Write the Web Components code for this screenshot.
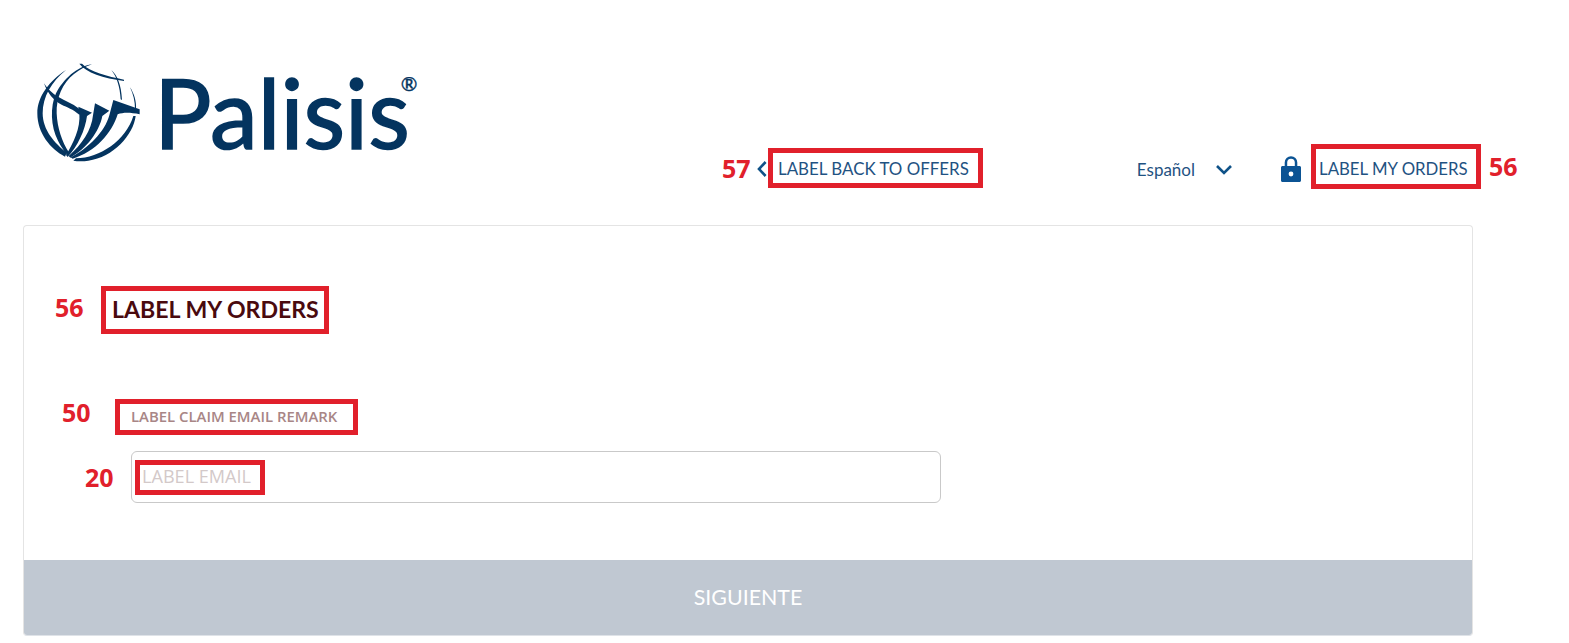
<!DOCTYPE html>
<html lang="es">
<head>
<meta charset="utf-8">
<title>Palisis</title>
<style>
    html, body { margin: 0; padding: 0; background: #fff; }
    body { font-family: "Lato", "Liberation Sans", sans-serif; position: relative; width: 1569px; height: 643px; overflow: hidden; }
</style>
</head>
<body>

<page-header>
    <brand-logo slot="logo"></brand-logo>
    <nav-back slot="back">LABEL BACK TO OFFERS</nav-back>
    <lang-select slot="lang">Español</lang-select>
    <nav-orders slot="orders">LABEL MY ORDERS</nav-orders>
</page-header>

<claim-card>
    <span slot="title">LABEL MY ORDERS</span>
    <span slot="remark">LABEL CLAIM EMAIL REMARK</span>
    <email-field slot="field" placeholder="LABEL EMAIL"></email-field>
    <span slot="action">SIGUIENTE</span>
</claim-card>

<mark-box x="768" y="148" w="215" h="40"></mark-box>
<mark-box x="1311" y="144" w="170" h="45"></mark-box>
<mark-box x="101" y="286" w="228" h="48"></mark-box>
<mark-box x="115" y="399" w="243" h="36"></mark-box>
<mark-box x="135" y="460" w="130" h="35"></mark-box>

<mark-num x="722" y="168">57</mark-num>
<mark-num x="1489" y="166">56</mark-num>
<mark-num x="55" y="307">56</mark-num>
<mark-num x="62" y="412">50</mark-num>
<mark-num x="85" y="477">20</mark-num>

<script>
/**
 * Attach an open shadow root holding the given markup.
 */
function shadow(el, html)
{
    el.attachShadow({mode: 'open'}).innerHTML = html;
}

class PageHeader extends HTMLElement
{
    constructor()
    {
        super();
        shadow(this, `
            <style>
                :host { display: flex; align-items: flex-start; height: 225px; box-sizing: border-box; padding: 50px 0 0 20px; color: #1f5282; }
                .nav { display: flex; align-items: center; height: 40px; margin-top: 99px; margin-left: 327px; }
                .lang { display: flex; margin-left: 168px; }
                .orders { display: flex; margin-left: 47px; }
                slot { display: contents; }
            </style>
            <slot name="logo"></slot>
            <div class="nav">
                <slot name="back"></slot>
                <div class="lang"><slot name="lang"></slot></div>
                <div class="orders"><slot name="orders"></slot></div>
            </div>
        `);
    }
}
customElements.define('page-header', PageHeader);

class BrandLogo extends HTMLElement
{
    constructor()
    {
        super();
        shadow(this, `
            <style>
                :host { display: flex; align-items: flex-start; width: 410px; height: 120px; color: #04345f; }
                svg { display: block; flex: none; width: 130px; height: 120px; }
                .name { font: 400 96px/1 "Lato", sans-serif; margin: 14px 0 0 4px; -webkit-text-stroke: 1.6px currentColor; }
                .reg { font: 400 20px/1 "Lato", sans-serif; margin: 23px 0 0 -9px; -webkit-text-stroke: 0.4px currentColor; }
            </style>
            <svg viewBox="0 0 390 360" fill="currentColor">
                <path d="M138 60C88 92 52 140 52 190C52 250 92 298 135 320L140 308C104 280 68 240 68 190C68 140 95 95 138 60Z"/>
                <path d="M216 43C170 50 130 88 108 130C90 170 92 230 114 272C122 288 132 302 141 314L146 306C126 275 112 235 110 190C108 145 128 98 162 72C180 58 198 49 216 43Z"/>
                <path d="M178 41C198 68 250 84 312 93L312 89C262 78 210 66 186 41Z"/>
                <path d="M72 100C88 125 110 140 132 150C152 159 172 170 188 186L178 194C160 178 140 171 125 164C100 152 82 128 72 100Z"/>
                <path d="M175 170L216 188L201 198C196 240 172 290 143 321L138 315C160 280 182 235 178 190Z"/>
                <path d="M225 160L268 182L247 198C238 245 200 295 151 323L146 318C185 285 215 240 219 196Z"/>
                <path d="M280 150L359 178L359 193C330 187 310 187 293 193C276 250 225 306 158 326L152 322C205 295 255 245 268 196Z"/>
                <path d="M274 60C292 76 304 104 306 150L302 148C300 110 290 80 274 60Z"/>
                <path d="M330 112C342 130 350 155 348 178L345 176C345 155 340 132 330 112Z"/>
                <path d="M347 198C340 255 280 322 205 332C188 335 172 334 160 332L168 325C240 325 318 270 340 198Z"/>
            </svg>
            <span class="name">Palisis</span>
            <span class="reg">®</span>
        `);
    }
}
customElements.define('brand-logo', BrandLogo);

class NavBack extends HTMLElement
{
    constructor()
    {
        super();
        shadow(this, `
            <style>
                :host { display: inline-flex; align-items: center; font: 400 16.9px/1 "Lato", sans-serif; }
                svg { width: 10px; height: 18px; margin-right: 11px; }
            </style>
            <svg viewBox="0 0 10 18" fill="none" stroke="#0f5288" stroke-width="2.6"><path d="M8.6 2L2 9L8.6 16"/></svg>
            <slot></slot>
        `);
    }
}
customElements.define('nav-back', NavBack);

class LangSelect extends HTMLElement
{
    constructor()
    {
        super();
        shadow(this, `
            <style>
                :host { display: inline-flex; align-items: center; font: 400 17px/1 "Lato", sans-serif; }
                svg { width: 18px; height: 11px; margin-left: 20px; }
            </style>
            <slot></slot>
            <svg viewBox="0 0 18 11" fill="none" stroke="#0f5288" stroke-width="2.6"><path d="M2 2L9 9L16 2"/></svg>
        `);
    }
}
customElements.define('lang-select', LangSelect);

class NavOrders extends HTMLElement
{
    constructor()
    {
        super();
        shadow(this, `
            <style>
                :host { display: inline-flex; align-items: center; font: 400 16.8px/1 "Lato", sans-serif; }
                svg { width: 22px; height: 28px; margin-right: 17px; }
            </style>
            <svg viewBox="0 0 22 28"><path fill="#0b5394" d="M2.5 11h2.2V7.5a6.3 6.3 0 0 1 12.6 0V11h2.2c.8 0 1.5.7 1.5 1.5v13c0 .8-.7 1.5-1.5 1.5h-17c-.8 0-1.5-.7-1.5-1.5v-13c0-.8.7-1.5 1.5-1.5ZM7.2 11h7.6V7.5a3.8 3.8 0 0 0-7.6 0V11Z"/><circle cx="11" cy="19" r="2.4" fill="#fff"/></svg>
            <slot></slot>
        `);
    }
}
customElements.define('nav-orders', NavOrders);

class ClaimCard extends HTMLElement
{
    constructor()
    {
        super();
        shadow(this, `
            <style>
                :host { display: flex; flex-direction: column; box-sizing: border-box; width: 1450px; height: 411px; margin-left: 23px; border: 1px solid #e4e4e4; border-bottom-color: #dfe3e8; border-radius: 4px; overflow: hidden; background: #fff; }
                .body { flex: 1; padding: 68px 0 0 88px; }
                .title { font: 700 23.1px/30px "Lato", sans-serif; color: #4a0a0e; }
                .remark { font: 600 14.9px/18px "Open Sans", sans-serif; color: #a88686; margin: 83px 0 0 19px; }
                .field { margin: 26px 0 0 19px; }
                .action { flex: none; height: 75px; display: flex; align-items: center; justify-content: center; background: #c0c8d2; color: #fff; font: 400 21.4px/1 "Lato", sans-serif; }
            </style>
            <div class="body">
                <div class="title"><slot name="title"></slot></div>
                <div class="remark"><slot name="remark"></slot></div>
                <div class="field"><slot name="field"></slot></div>
            </div>
            <div class="action"><slot name="action"></slot></div>
        `);
    }
}
customElements.define('claim-card', ClaimCard);

class EmailField extends HTMLElement
{
    constructor()
    {
        super();
        shadow(this, `
            <style>
                :host { display: block; box-sizing: border-box; width: 810px; height: 52px; border: 1px solid #c9c9c9; border-radius: 6px; }
                .hint { display: block; padding-left: 10px; font: 400 18.1px/49px "Open Sans", sans-serif; color: #d3c9c9; }
            </style>
            <span class="hint"></span>
        `);
        this.shadowRoot.querySelector('.hint').textContent = this.getAttribute('placeholder');
    }
}
customElements.define('email-field', EmailField);

// red review annotations, drawn over the page
class MarkBox extends HTMLElement
{
    constructor()
    {
        super();
        shadow(this, `
            <style>
                :host { position: absolute; box-sizing: border-box; border: 5px solid #e1202b; }
            </style>
        `);
    }

    connectedCallback()
    {
        this.style.left = this.getAttribute('x') + 'px';
        this.style.top = this.getAttribute('y') + 'px';
        this.style.width = this.getAttribute('w') + 'px';
        this.style.height = this.getAttribute('h') + 'px';
    }
}
customElements.define('mark-box', MarkBox);

class MarkNum extends HTMLElement
{
    constructor()
    {
        super();
        shadow(this, `
            <style>
                :host { position: absolute; font: 700 25px/1 "Open Sans", sans-serif; color: #e1202b; transform: translateY(-50%); }
            </style>
            <slot></slot>
        `);
    }

    connectedCallback()
    {
        this.style.left = this.getAttribute('x') + 'px';
        this.style.top = this.getAttribute('y') + 'px';
    }
}
customElements.define('mark-num', MarkNum);
</script>
</body>
</html>
